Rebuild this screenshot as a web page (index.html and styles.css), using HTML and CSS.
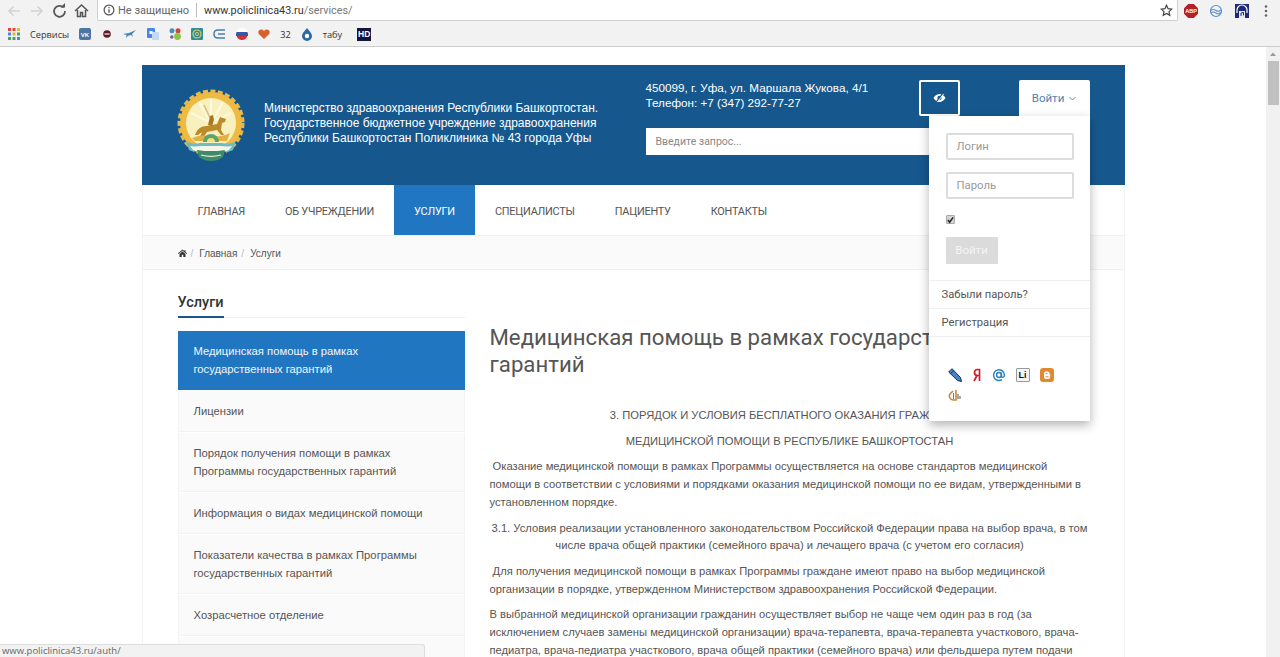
FILE: index.html
```html
<!DOCTYPE html>
<html lang="ru">
<head>
<meta charset="utf-8">
<title>Услуги</title>
<link rel="stylesheet" href="styles.css">
</head>
<body>
<div class="browser">
  <div class="toolbar">
    <svg class="nav-ic" width="90" height="22" viewBox="0 0 90 22" fill="none">
      <path d="M20 11H9M13.500 6.500 9 11l4.500 4.500" stroke="#d2d2d2" stroke-width="1.600"/>
      <path d="M31 11h11M37.500 6.500 42 11l-4.500 4.500" stroke="#d2d2d2" stroke-width="1.600"/>
      <path d="M63.500 7.500A5.500 5.500 0 1 0 65 11" stroke="#555" stroke-width="1.700"/>
      <path d="M60.500 7.500h4.500V3z" fill="#555"/>
      <path d="M75 11l6.500-6L88 11M77.500 10v6.500h3v-4h2v4h3V10" stroke="#555" stroke-width="1.500"/>
    </svg>
    <div class="omnibox">
      <svg class="info" width="12" height="12" viewBox="0 0 12 12" fill="none"><circle cx="6" cy="6" r="4.900" stroke="#555" stroke-width="1.200"/><path d="M6 5.200v3.500M6 3v1.200" stroke="#555" stroke-width="1.300"/></svg>
      <span class="secure">Не защищено</span>
      <span class="omni-sep"></span>
      <span class="url">www.policlinica43.ru<span class="url-path">/services/</span></span>
      <svg class="star" width="13" height="13" viewBox="0 0 14 14" fill="none"><path d="M7 1.300l1.700 3.700 4 .5-3 2.700.8 4L7 10.200l-3.500 2 .8-4-3-2.700 4-.5z" stroke="#444" stroke-width="1.300"/></svg>
    </div>
    <div class="exts">
      <svg width="14" height="14" viewBox="0 0 14 14"><path d="M4.200 0h5.600L14 4.200v5.600L9.800 14H4.200L0 9.800V4.200z" fill="#b3202a"/><text x="7" y="9" class="abp">ABP</text></svg>
      <svg width="14" height="14" viewBox="0 0 14 14" fill="none"><circle cx="7" cy="7" r="5.500" stroke="#5b8fd0" stroke-width="1.200"/><path d="M2 6.500c2-2 3.500-1 5 0s3 1.500 5-.5M2 9c2-2 3.500-1 5 0s3 1.500 5-.5" stroke="#5b8fd0" stroke-width="1.100"/></svg>
      <svg class="ext-third" width="14" height="14" viewBox="0 0 14 14"><rect width="14" height="14" fill="#1c2a78"/><path d="M2 9V6a5 5 0 0 1 10 0v3" fill="none" stroke="#fff" stroke-width="1.200"/><rect x="4" y="7" width="6" height="7" fill="#e9e9f5"/><path d="M6 12V9l2.500-.6v3" fill="none" stroke="#1c2a78"/></svg>
      <svg class="menu-dots" width="4" height="14" viewBox="0 0 4 14"><circle cx="2" cy="2.500" r="1.300" fill="#666"/><circle cx="2" cy="7" r="1.300" fill="#666"/><circle cx="2" cy="11.500" r="1.300" fill="#666"/></svg>
    </div>
  </div>
  <div class="bookmarks">
    <svg class="bm" width="12" height="12" viewBox="0 0 12 12">
      <g fill="#d8483c"><rect x="0" y="0" width="3" height="3"/><rect x="4.500" y="0" width="3" height="3"/></g><rect x="9" y="0" width="3" height="3" fill="#e8b830"/>
      <rect x="0" y="4.500" width="3" height="3" fill="#4a86e8"/><rect x="4.500" y="4.500" width="3" height="3" fill="#e8b830"/><rect x="9" y="4.500" width="3" height="3" fill="#46a35a"/>
      <g fill="#46a35a"><rect x="0" y="9" width="3" height="3"/><rect x="4.500" y="9" width="3" height="3"/></g><rect x="9" y="9" width="3" height="3" fill="#4a86e8"/>
    </svg>
    <span class="bm-text bm-services">Сервисы</span>
    <svg class="bm" width="12" height="12" viewBox="0 0 12 12"><rect width="12" height="12" rx="2" fill="#4c75a3"/><text x="6" y="8.500" class="vk">VK</text></svg>
    <svg class="bm" width="12" height="12" viewBox="0 0 12 12"><rect width="12" height="12" fill="#f4f0f0"/><circle cx="6" cy="6" r="3.800" fill="#5a1c2c"/><rect x="3.500" y="5.300" width="5" height="1.400" fill="#e9d6d6"/></svg>
    <svg class="bm" width="14" height="12" viewBox="0 0 14 12"><path d="M0 6l6-1 7-3-4 4 1 3-2-2-3 .8-2 2.200.5-3z" fill="#3f84b8"/></svg>
    <svg class="bm" width="12" height="12" viewBox="0 0 12 12"><rect width="8" height="10" rx="1" fill="#4a86e8"/><rect x="5" y="4" width="7" height="8" rx="1" fill="#c5d8f2"/><rect x="2.500" y="3" width="3" height="3" fill="#fff"/></svg>
    <svg class="bm" width="12" height="12" viewBox="0 0 12 12"><circle cx="3" cy="2.800" r="2.500" fill="#3f8fc4"/><circle cx="9" cy="2.800" r="2.500" fill="#d0453a"/><circle cx="2.800" cy="9" r="1.800" fill="#7a5bb0"/><circle cx="8.500" cy="8.500" r="3.400" fill="#8cc63f"/></svg>
    <svg class="bm" width="12" height="12" viewBox="0 0 12 12" fill="none"><rect width="12" height="12" rx="1" fill="#2f8f96"/><circle cx="6" cy="6" r="4" stroke="#e0c86a" stroke-width="1.200"/><circle cx="6" cy="6" r="1.600" stroke="#e0c86a"/></svg>
    <svg class="bm" width="13" height="12" viewBox="0 0 13 12" fill="none"><path d="M12 2H5C2 2 1 4 1 6s1 4 4 4h7M12 6H5" stroke="#4a7fa8" stroke-width="1.500"/></svg>
    <svg class="bm" width="12" height="12" viewBox="0 0 12 12"><circle cx="6" cy="6" r="6" fill="#fff"/><path d="M.6 4h10.800a6 6 0 0 1 .6 2v2H0V6a6 6 0 0 1 .6-2z" fill="#3558a8"/><path d="M.6 8h10.800A6 6 0 0 1 6 12 6 6 0 0 1 .6 8z" fill="#d2303a"/></svg>
    <svg class="bm" width="12" height="12" viewBox="0 0 12 12"><path d="M6 11L1 6.200C-.6 4.200.8 1.500 3.200 1.500 4.500 1.500 5.500 2.200 6 3c.5-.8 1.500-1.500 2.800-1.500 2.400 0 3.800 2.700 2.200 4.700z" fill="#d9602c"/></svg>
    <span class="bm-text">32</span>
    <svg class="bm" width="12" height="13" viewBox="0 0 12 13"><path d="M6 0C8 3 11 5 11 8a5 5 0 0 1-10 0C1 5 4 3 6 0z" fill="#2c6aa3"/><circle cx="6" cy="8" r="2.200" fill="#fff"/></svg>
    <span class="bm-text bm-tabu">табу</span>
    <span class="hd">HD</span>
  </div>
  <div class="chrome-line"></div>

  <div class="page">
    <div class="viewport">
      <div class="site">
        <header class="hero">
          <svg class="emblem" width="68" height="74" viewBox="0 0 68 74">
            <circle cx="34" cy="34" r="32" fill="none" stroke="#e9b84a" stroke-width="3" stroke-dasharray="5 2.500"/>
            <circle cx="34" cy="34" r="31" fill="#eeba42"/>
            <circle cx="34" cy="34" r="25" fill="#f9f1bd"/>
            <path d="M34 34L22 13M34 34L46 13M34 34L14 24M34 34L54 24M34 34V10" stroke="#fdf9e0" stroke-width="2"/>
            <path d="M33 29L27 16" stroke="#d8c07a" stroke-width="1.600"/>
            <path d="M18 46c2-6 6-9 12-9l10-2 3-7 6 2-1 3-3 1-1 7 3 5h-3l-4-5-10 2-4 6-3-1 2-5-4 3z" fill="#bb8a2a"/>
            <path d="M31 36l2-9 3-1 1 5-2 6z" fill="#a8791f"/>
            <path d="M15 49c6-3 13-3 19-2s13 0 19-3l-3 8H18z" fill="#e3b044"/>
            <path d="M26 53a8 8 0 0 1 16 0z" fill="#5ea36e"/>
            <path d="M30 53a4 4 0 0 1 8 0z" fill="#f3e27c"/>
            <path d="M9 52c5 3 9 3 14 2h22c5 1 9 1 14-2l-3 9c-4 2-8 2-11 1H23c-3 1-7 1-11-1z" fill="#6fbcc0"/>
            <path d="M13 57c4 1 8 0 12 0h18c4 0 8 1 12 0l-3 4c-4 2-7 1-10 1H26c-3 0-6 1-10-1z" fill="#f4f6ea"/>
            <path d="M20 61c5 1 10 1 14 1s9 0 14-1l-2 7c-4 3-8 4-12 4s-8-1-12-4z" fill="#3f8a6a"/>
            <path d="M24 66c7 2 13 2 20 0" stroke="#e8f0d8" stroke-width="1.200" fill="none"/>
          </svg>
          <div class="org">Министерство здравоохранения Республики Башкортостан. Государственное бюджетное учреждение здравоохранения Республики Башкортостан Поликлиника № 43 города Уфы</div>
          <div class="hero-side">
            <div class="hero-top">
              <div class="contacts">450099, г. Уфа, ул. Маршала Жукова, 4/1<br>Телефон: +7 (347) 292-77-27</div>
              <button class="eye-btn" type="button">
                <svg width="13" height="10" viewBox="0 0 14 10"><path d="M.5 5C2.500 2 4.700.8 7 .8S11.500 2 13.500 5c-2 3-4.200 4.200-6.500 4.200S2.500 8 .5 5z" fill="#fff"/><circle cx="7" cy="5" r="2.300" fill="#16588e"/><path d="M3.500 9.500l7-9" stroke="#16588e" stroke-width="1.600"/><path d="M4.500 9.500l7-9" stroke="#fff" stroke-width="1"/></svg>
              </button>
              <div class="login-wrap">
                <button class="login-btn" type="button">Войти
                  <svg width="7" height="5" viewBox="0 0 7 5" fill="none"><path d="M.5 1l3 3 3-3" stroke="#5c8fb8"/></svg>
                </button>
                <div class="dropdown">
                  <div class="form">
                    <input class="field" type="text" placeholder="Логин">
                    <input class="field" type="text" placeholder="Пароль">
                    <span class="check"><svg width="8" height="8" viewBox="0 0 8 8" fill="none"><path d="M1 4l2 2.500L7 1" stroke="#222" stroke-width="1.700"/></svg></span>
                    <span class="submit">Войти</span>
                  </div>
                  <a class="drop-link">Забыли пароль?</a>
                  <a class="drop-link">Регистрация</a>
                  <div class="socials">
                    <svg width="14" height="14" viewBox="0 0 14 14"><path d="M.7 4L4 .7l8.500 8.800 1 4-4-1z" fill="#4a82c8" stroke="#12305c" stroke-width="1"/><path d="M2.500 5.800L5.800 2.500" stroke="#12305c"/></svg>
                    <svg width="10" height="14" viewBox="0 0 10 14" fill="none"><path d="M7.500 13V1.500H5.500C3.500 1.500 2.500 3 2.500 4.500S3.500 7.500 5.500 7.500h2M5 7.500L2 13" stroke="#c8202c" stroke-width="1.700"/></svg>
                    <svg width="14" height="14" viewBox="0 0 14 14" fill="none"><circle cx="7" cy="7" r="2.400" stroke="#2a80bd" stroke-width="1.500"/><path d="M9.400 4.500V8c0 2 3 2 3-1A5.400 5.400 0 1 0 10 11.600" stroke="#2a80bd" stroke-width="1.400"/></svg>
                    <span class="li">Li</span>
                    <svg width="14" height="14" viewBox="0 0 14 14"><rect width="14" height="14" rx="3" fill="#e08a2f"/><path d="M4 5.500a2 2 0 0 1 2-2h1.500a2 2 0 0 1 2 2V6h.7v3a2 2 0 0 1-2 2H6a2 2 0 0 1-2-2z" fill="#fff"/><path d="M5.500 5.500h2M5.500 8.800h3" stroke="#e08a2f"/></svg>
                    <svg width="14" height="14" viewBox="0 0 14 14" fill="none"><path d="M5 3L2 6c-1.500 2 0 6 3 6h3V2" stroke="#c8893a" stroke-width="1.600"/><path d="M5.500 5v6" stroke="#a86a20"/><path d="M10 6v5M12 8v3" stroke="#7a7a7a" stroke-width="1.300"/></svg>
                  </div>
                </div>
              </div>
            </div>
            <input class="search" type="text" placeholder="Введите запрос...">
          </div>
        </header>

        <nav class="mainnav">
          <a class="nav-item">Главная</a>
          <a class="nav-item">Об учреждении</a>
          <a class="nav-item nav-active">Услуги</a>
          <a class="nav-item">Специалисты</a>
          <a class="nav-item">Пациенту</a>
          <a class="nav-item">Контакты</a>
        </nav>

        <div class="crumbs">
          <svg width="9" height="8" viewBox="0 0 9 8"><path d="M4.500.5L0 4.300l.5.600L4.500 1.700l4 3.200.5-.6-1.500-1.300V1H6.500v1.200zM1.500 5v3h2.200V5.800h1.600V8h2.200V5L4.500 2.600z" fill="#333"/></svg>
          <span class="crumb-sep">/</span>
          <span>Главная</span>
          <span class="crumb-sep">/</span>
          <span>Услуги</span>
        </div>

        <div class="columns">
          <aside class="sidebar">
            <h3 class="side-title"><span>Услуги</span></h3>
            <ul class="side-list">
              <li class="side-item side-active">Медицинская помощь в рамках государственных гарантий</li>
              <li class="side-item">Лицензии</li>
              <li class="side-item">Порядок получения помощи в рамках Программы государственных гарантий</li>
              <li class="side-item">Информация о видах медицинской помощи</li>
              <li class="side-item">Показатели качества в рамках Программы государственных гарантий</li>
              <li class="side-item">Хозрасчетное отделение</li>
              <li class="side-item">Контакты</li>
            </ul>
          </aside>
          <main class="article">
            <h1 class="article-title">Медицинская помощь в рамках государственных гарантий</h1>
            <p class="center">3. ПОРЯДОК И УСЛОВИЯ БЕСПЛАТНОГО ОКАЗАНИЯ ГРАЖДАНАМ</p>
            <p class="center">МЕДИЦИНСКОЙ ПОМОЩИ В РЕСПУБЛИКЕ БАШКОРТОСТАН</p>
            <p>&nbsp;Оказание медицинской помощи в рамках Программы осуществляется на основе стандартов медицинской помощи в соответствии с условиями и порядками оказания медицинской помощи по ее видам, утвержденными в установленном порядке.</p>
            <p class="center">3.1. Условия реализации установленного законодательством Российской Федерации права на выбор врача, в том числе врача общей практики (семейного врача) и лечащего врача (с учетом его согласия)</p>
            <p>&nbsp;Для получения медицинской помощи в рамках Программы граждане имеют право на выбор медицинской организации в порядке, утвержденном Министерством здравоохранения Российской Федерации.</p>
            <p>В выбранной медицинской организации гражданин осуществляет выбор не чаще чем один раз в год (за исключением случаев замены медицинской организации) врача-терапевта, врача-терапевта участкового, врача-педиатра, врача-педиатра участкового, врача общей практики (семейного врача) или фельдшера путем подачи заявления лично или через своего представителя.</p>
          </main>
        </div>
      </div>
    </div>
    <div class="scrollbar">
      <svg width="14" height="14" viewBox="0 0 14 14"><path d="M4 9l3-3.500L10 9z" fill="#9a9a9a"/></svg>
      <div class="thumb"></div>
    </div>
    <div class="status">www.policlinica43.ru/auth/</div>
  </div>
</div>
</body>
</html>
```

FILE: styles.css
```css
* { box-sizing: border-box; }
html, body { margin: 0; height: 100%; overflow: hidden; background: #fff; }
body { font-family: "Liberation Sans", Arial, sans-serif; font-size: 12px; color: #555; }
.browser { display: flex; flex-direction: column; height: 657px; }

.toolbar { display: flex; align-items: flex-start; height: 22px; background: #f2f2f2; flex: none; }
.nav-ic { flex: none; margin-right: 7px; }
.omnibox { display: flex; align-items: center; width: 1081px; height: 21px; background: #fff; border: 1px solid #cfcfcf; border-top: 0; border-radius: 0 0 2px 2px; padding: 0 8px 0 5px; font-family: Roboto, sans-serif; flex: none; }
.info { flex: none; }
.secure { margin-left: 3px; font-size: 11px; color: #666; }
.omni-sep { width: 1px; height: 14px; background: #bbb; margin: 0 7px; }
.url { font-size: 10.800px; color: #333; flex: 1; }
.url-path { color: #777; }
.star { flex: none; margin-right: -4px; }
.exts { display: flex; align-items: center; gap: 11px; height: 21px; margin-left: 6px; }
.ext-third { margin-left: 1px; }
.abp { font: bold 5.500px "Liberation Sans", sans-serif; fill: #fff; text-anchor: middle; }
.menu-dots { margin-left: 4px; }

.bookmarks { display: flex; align-items: center; gap: 10px; height: 22px; padding: 2px 0 0 8px; background: #f2f2f2; flex: none; }
.bm { flex: none; }
.bm-text { font-family: "Open Sans", sans-serif; font-size: 9.200px; color: #333; }
.bm-tabu { margin-right: 5px; }
.vk { font: bold 6px "Liberation Sans", sans-serif; fill: #fff; text-anchor: middle; }
.hd { width: 14px; height: 13px; background: #14143c; color: #fff; font: bold 8.500px/13px "Liberation Sans", sans-serif; text-align: center; }
.chrome-line { height: 3px; background: linear-gradient(#f2f2f2 0 2px, #cdcdcd 2px); flex: none; }

.page { position: relative; display: flex; flex: 1; min-height: 0; overflow: hidden; }
.viewport { flex: 1; min-width: 0; overflow: hidden; padding-top: 18px; }
.site { width: 983px; margin: 0 auto; border-right: 1px solid #f3f3f3; border-left: 1px solid #f3f3f3; }

.hero { display: flex; align-items: flex-start; height: 120px; background: #16588e; margin: 0 -1px; padding-left: 35px; color: #fff; }
.emblem { flex: none; margin-top: 24px; }
.org { width: 401px; margin-top: 36px; padding: 0 40px 0 19.500px; font: 12px/15px "Liberation Sans", Arial, sans-serif; flex: none; }
.hero-side { width: 444px; margin-top: 15px; flex: none; }
.hero-top { display: flex; align-items: flex-start; height: 48px; }
.contacts { width: 273px; font: 11.700px/15px "Liberation Sans", Arial, sans-serif; }
.eye-btn { display: flex; align-items: center; justify-content: center; width: 41px; height: 36px; padding: 0; background: #16588e; border: 2px solid #fff; border-radius: 2px; flex: none; }
.login-wrap { position: relative; margin-left: 59px; flex: none; }
.login-btn { display: flex; align-items: center; justify-content: center; gap: 5px; width: 71px; height: 36px; padding: 0; background: #fff; border: 0; border-radius: 2px 2px 0 0; font: 11.500px Roboto, sans-serif; color: #4d84b0; }
.search { display: block; width: 300px; height: 27px; padding: 0 10px; background: #fff; border: 0; font: 10.500px Roboto, sans-serif; }
.search::placeholder { color: #888; }

.dropdown { position: absolute; top: 36px; right: 0; z-index: 5; width: 161px; height: 305px; background: #fff; box-shadow: 0 4px 10px rgba(0, 0, 0, .3); color: #555; }
.form { display: flex; flex-direction: column; align-items: flex-start; padding: 17px 16px 16px 17px; height: 164px; }
.field { width: 128px; height: 27px; padding: 0 9px; margin-bottom: 12px; background: #fff; border: 2px solid #dcdcdc; border-radius: 2px; font: 11.300px Roboto, sans-serif; }
.field::placeholder { color: #999; }
.check { display: flex; align-items: center; justify-content: center; width: 9px; height: 9px; margin-top: 4px; background: #d4d4d4; border: 1px solid #aaa; border-radius: 1px; }
.submit { width: 52px; height: 27px; margin-top: 13px; background: #dbdbdb; color: #f4f4f4; font: 11.500px/27px Roboto, sans-serif; text-align: center; border-radius: 1px; }
.drop-link { display: block; height: 28px; padding-left: 13px; border-top: 1px solid #f0f0f0; font: 11.200px/28px Roboto, sans-serif; color: #555; }
.socials { display: flex; flex-wrap: wrap; align-items: center; gap: 6px 10px; padding: 31px 20px 0 19px; border-top: 1px solid #f0f0f0; }
.li { width: 14px; height: 14px; background: #f4f4f4; border: 1px solid #999; border-radius: 1px; color: #111; font: bold 9px/12px "Liberation Sans", sans-serif; text-align: center; }

.mainnav { display: flex; height: 51px; padding-left: 35px; background: #fff; border-bottom: 1px solid #eef1f3; }
.nav-item { display: block; height: 50px; padding: 0 20px; font: 10.900px/54px Roboto, sans-serif; letter-spacing: -.23px; text-transform: uppercase; color: #555; }
.nav-active { background: #2176c1; color: #fff; }
.crumbs { display: flex; align-items: center; gap: 4px; height: 34px; padding: 1px 0 0 35px; background: #fafafa; border-bottom: 1px solid #eef1f3; font-size: 10px; color: #555; }
.crumb-sep { color: #bbb; margin-right: 2px; }

.columns { display: flex; padding: 21px 35px 0; }
.sidebar { width: 287px; flex: none; }
.side-title { margin: 0 0 13px; font: 500 14.500px/21px Roboto, sans-serif; height: 27px; padding-top: 1px; color: #333; border-bottom: 1px solid #eef1f3; }
.side-title span { display: inline-block; height: 26px; border-bottom: 2px solid #16588e; }
.side-list { list-style: none; margin: 0; padding: 0; }
.side-item { padding: 11px 15px; font-size: 11.250px; line-height: 18px; background: #fafafa; border: 1px solid #f3f3f3; border-top: 0; margin-bottom: 1px; color: #555; }
.side-active { background: #2176c1; color: #f2f6fb; border-color: #2176c1; }
.article { width: 600px; margin-left: 25px; flex: none; font-size: 11.200px; line-height: 17.700px; color: #555; }
.article-title { margin: 33px 0 29px; font: 400 22.200px/27px Roboto, sans-serif; color: #555; }
.article p { margin: 0 0 8px; }
.article .center { text-align: center; }

.scrollbar { width: 14px; background: #f1f1f1; flex: none; }
.scrollbar svg { display: block; }
.thumb { width: 11px; height: 44px; margin-left: 2px; background: #c0c0c0; }
.status { position: absolute; left: 0; bottom: 0; width: 425px; height: 13px; padding-left: 2px; background: #f2f2f2; border: 1px solid #ddd; border-left: 0; border-bottom: 0; border-radius: 0 3px 0 0; font: 9.500px/12px "Open Sans", sans-serif; color: #666; }
```
